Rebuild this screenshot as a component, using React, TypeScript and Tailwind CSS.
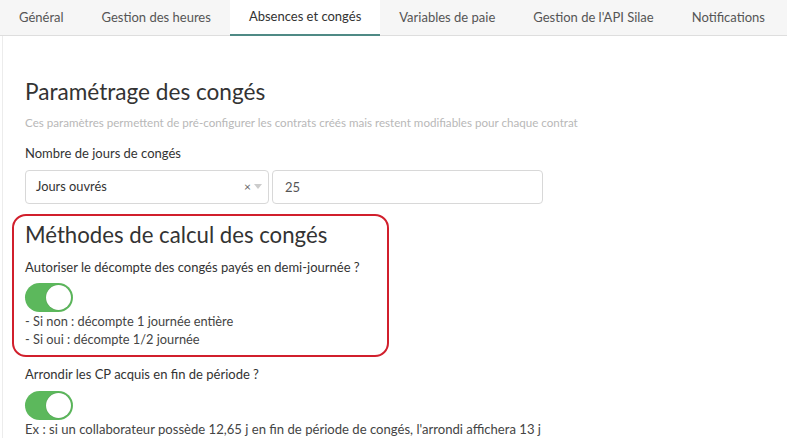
import React, { useState } from 'react';

const tabs = [
  'Général',
  'Gestion des heures',
  'Absences et congés',
  'Variables de paie',
  "Gestion de l'API Silae",
  'Notifications',
];

const Toggle: React.FC<{ on: boolean; onChange: () => void }> = ({ on, onChange }) => (
  <button
    onClick={onChange}
    className={`relative flex h-[29px] w-[48px] items-center rounded-full p-[2px] transition-colors ${
      on ? 'bg-[#5cb85c] justify-end' : 'bg-[#dcdcdc] justify-start'
    }`}
  >
    <span className="block h-[25px] w-[25px] rounded-full bg-white shadow-[0_0_1px_rgba(0,0,0,0.3)]" />
  </button>
);

export default function App() {
  const [active, setActive] = useState(2);
  const [halfDay, setHalfDay] = useState(true);
  const [roundCp, setRoundCp] = useState(true);

  return (
    <div className="min-h-[443px] w-[787px] bg-white font-['Lato',sans-serif] text-[#333]">
      {/* onglets */}
      <div className="flex h-[36px] border-b border-[#dedede] bg-[#f6f6f6]">
        {tabs.map((t, i) => (
          <button
            key={t}
            onClick={() => setActive(i)}
            className={`h-[36px] shrink-0 whitespace-nowrap px-[19px] text-[13px] ${
              i === active
                ? 'border-b-2 border-[#4f8a85] bg-white text-[#333]'
                : 'text-[#555]'
            }`}
          >
            {t}
          </button>
        ))}
      </div>

      <div className="ml-[2px] border-l border-[#ececec] pl-[22px] pt-[42px]">
        <h2 className="text-[22.6px] leading-[28px] text-[#333]">Paramétrage des congés</h2>
        <p className="mt-[8px] text-[11.6px] text-[#b8b8b8]">
          Ces paramètres permettent de pré-configurer les contrats créés mais restent modifiables pour chaque contrat
        </p>

        <label className="mt-[13px] block text-[13px] text-[#333]">Nombre de jours de congés</label>
        <div className="mt-[6px] flex gap-[3px]">
          <div className="flex h-[34px] w-[244px] items-center rounded border border-[#d8d8d8] pl-[10px] pr-[6px] text-[12.8px]">
            <span className="flex-1">Jours ouvrés</span>
            <span className="text-[12px] text-[#666]">×</span>
            <span className="ml-[3px] border-x-[4px] border-t-[5px] border-x-transparent border-t-[#ccc]" />
          </div>
          <input
            defaultValue="25"
            className="h-[34px] w-[271px] rounded border border-[#d8d8d8] px-[12px] text-[13px] text-[#555] outline-none"
          />
        </div>

        <div className="-ml-[13px] mt-[10px] w-[377px] rounded-[14px] border-2 border-[#d11f2c] px-[11px] pb-[7px] pt-[5px]">
          <h3 className="text-[22.2px] leading-[28px] text-[#333]">Méthodes de calcul des congés</h3>
          <p className="mt-[9px] text-[13px]">Autoriser le décompte des congés payés en demi-journée ?</p>
          <div className="mt-[6px]">
            <Toggle on={halfDay} onChange={() => setHalfDay(!halfDay)} />
          </div>
          <p className="text-[12.8px] leading-[18px] text-[#444]">- Si non : décompte 1 journée entière</p>
          <p className="text-[12.8px] leading-[18px] text-[#444]">- Si oui : décompte 1/2 journée</p>
        </div>

        <p className="mt-[8px] text-[13px]">Arrondir les CP acquis en fin de période ?</p>
        <div className="mt-[6px]">
          <Toggle on={roundCp} onChange={() => setRoundCp(!roundCp)} />
        </div>
        <p className="text-[13.1px] leading-[18px] text-[#444]">
          Ex : si un collaborateur possède 12,65 j en fin de période de congés, l'arrondi affichera 13 j
        </p>
      </div>
    </div>
  );
}
